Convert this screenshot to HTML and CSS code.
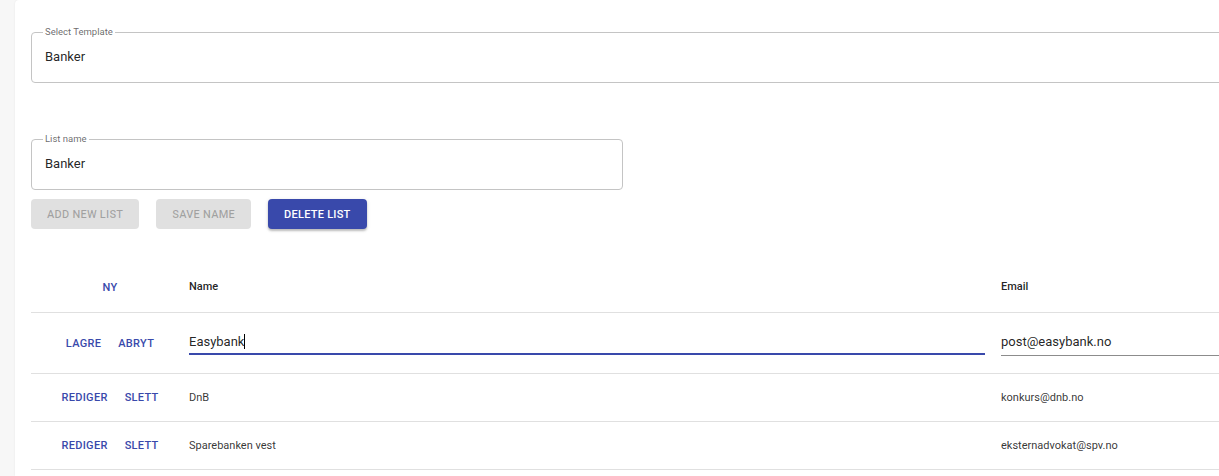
FILE: index.html
```html
<!DOCTYPE html>
<html lang="no">
<head>
<meta charset="utf-8">
<title>Lister</title>
<link rel="stylesheet" href="styles.css">
</head>
<body>
<main class="card">
  <fieldset class="field field-wide">
    <legend>Select Template</legend>
    <div class="field-value">Banker</div>
  </fieldset>

  <fieldset class="field field-name">
    <legend>List name</legend>
    <div class="field-value">Banker</div>
  </fieldset>

  <div class="buttons">
    <button class="btn btn-disabled">Add new list</button>
    <button class="btn btn-disabled">Save name</button>
    <button class="btn btn-primary">Delete list</button>
  </div>

  <div class="table">
    <div class="row head">
      <div class="actions"><span class="link">NY</span></div>
      <div class="cell">Name</div>
      <div class="cell">Email</div>
    </div>
    <div class="row edit">
      <div class="actions"><span class="link">LAGRE</span><span class="link">ABRYT</span></div>
      <div class="cell"><div class="input focused">Easybank<span class="caret"></span></div></div>
      <div class="cell"><div class="input">post@easybank.no</div></div>
    </div>
    <div class="row">
      <div class="actions"><span class="link">REDIGER</span><span class="link">SLETT</span></div>
      <div class="cell">DnB</div>
      <div class="cell">konkurs@dnb.no</div>
    </div>
    <div class="row">
      <div class="actions"><span class="link">REDIGER</span><span class="link">SLETT</span></div>
      <div class="cell">Sparebanken vest</div>
      <div class="cell">eksternadvokat@spv.no</div>
    </div>
  </div>
</main>
</body>
</html>
```

FILE: styles.css
```css
html, body {
  margin: 0;
  padding: 0;
  overflow: hidden;
}
body {
  background: #f7f7f7;
  font-family: Roboto, "Liberation Sans", Arial, sans-serif;
  color: rgba(0, 0, 0, 0.87);
  width: 1219px;
  height: 476px;
}
.card {
  margin-left: 15px;
  width: 1260px;
  height: 476px;
  background: #fff;
  border-radius: 4px 0 0 0;
  box-shadow: 0 0 2px rgba(0, 0, 0, 0.08);
  padding: 26px 0 0 16px;
  box-sizing: border-box;
}
.field {
  margin: 0;
  border: 1px solid #c4c4c4;
  border-radius: 4px;
  padding: 0 12px 5px 11px;
  box-sizing: border-box;
  height: 57px;
}
.field legend {
  font-size: 9.5px;
  line-height: 11px;
  height: 12px;
  color: rgba(0, 0, 0, 0.6);
  padding: 0 2px;
}
.field-wide {
  width: 1220px;
}
.field-name {
  width: 592px;
  margin-top: 50px;
}
.field-value {
  height: 38px;
  line-height: 38px;
  font-size: 13px;
  padding-left: 2px;
  color: rgba(0, 0, 0, 0.87);
}
.buttons {
  display: flex;
  gap: 17px;
  margin-top: 9px;
}
.btn {
  font-family: Roboto, "Liberation Sans", Arial, sans-serif;
  font-size: 11px;
  font-weight: 500;
  letter-spacing: 0.25px;
  text-transform: uppercase;
  height: 30px;
  border: none;
  border-radius: 4px;
  padding: 0 16px;
}
.btn-disabled {
  background: #e0e0e0;
  color: rgba(0, 0, 0, 0.28);
}
.btn-primary {
  background: #3949ab;
  color: #fff;
  box-shadow: 0 2px 2px rgba(0, 0, 0, 0.2), 0 1px 4px rgba(0, 0, 0, 0.12);
}
.table {
  margin-top: 33px;
  width: 1230px;
}
.row {
  display: grid;
  grid-template-columns: 158px 812px 260px;
  align-items: center;
  height: 47px;
  border-bottom: 1px solid #e0e0e0;
  font-size: 11px;
  color: rgba(0, 0, 0, 0.8);
}
.row .cell:nth-child(2) {
  padding-right: 16px;
}
.row.head {
  height: 50px;
  font-weight: 500;
  color: rgba(0, 0, 0, 0.87);
}
.row.head .cell {
  padding-bottom: 1px;
}
.row.edit {
  height: 60px;
  align-items: start;
}
.row.edit .actions {
  align-self: center;
}
.actions {
  display: flex;
  justify-content: center;
  gap: 1px;
}
.link {
  color: #3949ab;
  font-weight: 500;
  font-size: 11px;
  padding: 0 8px;
  letter-spacing: 0.3px;
}
.input {
  font-size: 13px;
  height: 25px;
  line-height: 20px;
  padding-top: 1px;
  margin-top: 18px;
  border-bottom: 1px solid #8c8c8c;
  box-sizing: border-box;
  color: rgba(0, 0, 0, 0.87);
}
.input.focused {
  height: 24px;
  border-bottom: 2px solid #3949ab;
}
.caret {
  display: inline-block;
  width: 1px;
  height: 15px;
  background: #000;
  vertical-align: -3px;
}
```
